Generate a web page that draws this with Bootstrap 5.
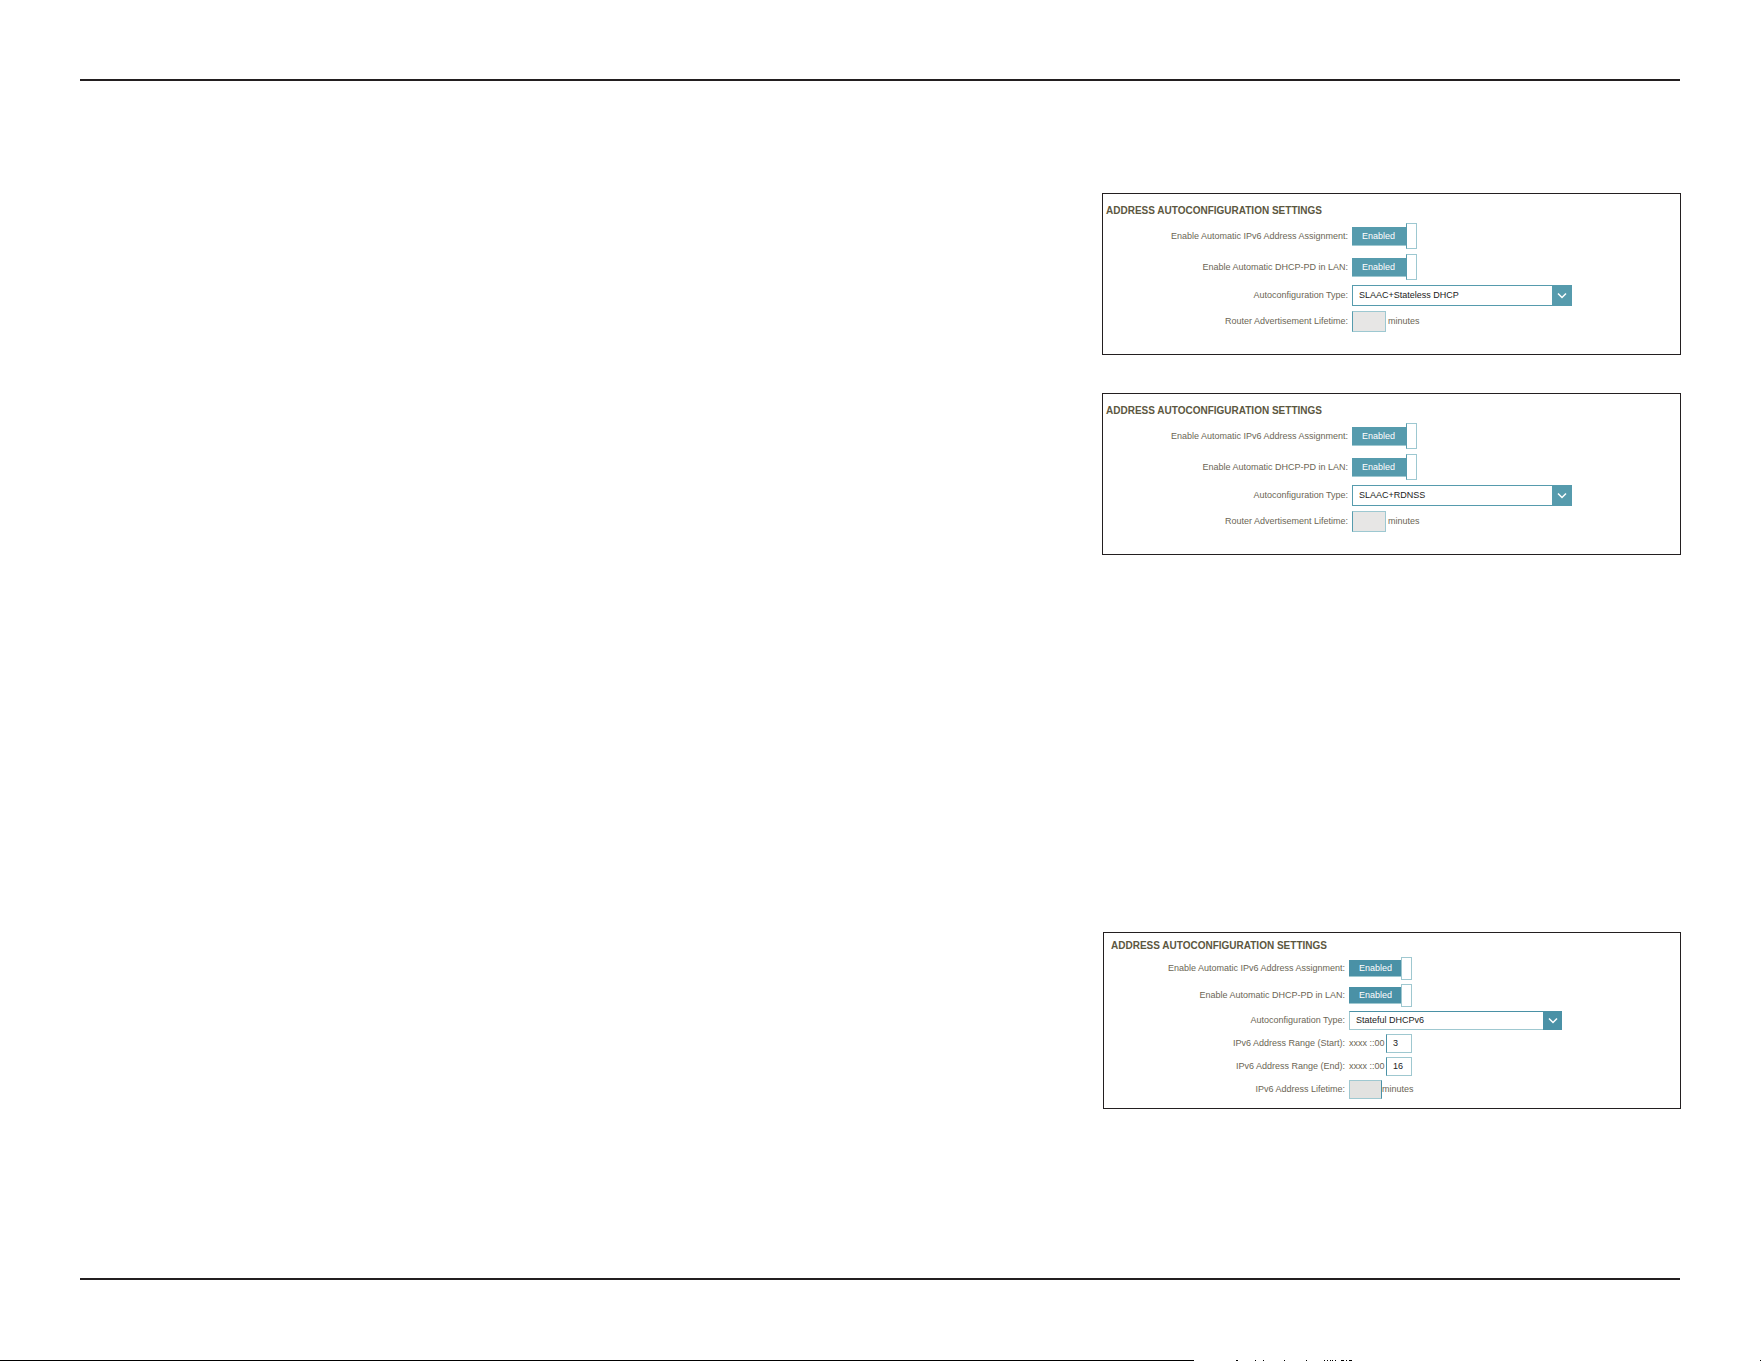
<!DOCTYPE html>
<html lang="en">
<head>
<meta charset="utf-8">
<meta name="viewport" content="width=device-width, initial-scale=1">
<title>Address Autoconfiguration Settings</title>
<link href="https://cdn.jsdelivr.net/npm/bootstrap@5.3.0/dist/css/bootstrap.min.css" rel="stylesheet">
<style>
  body { font-family: "Liberation Sans", Arial, sans-serif; background: #fff; }
  .page-rule { border: 0; border-top: 2px solid #231f20; opacity: 1; margin: 0 1px 0 0; }
  .page-head { padding: 79px 80px 0; }
  .page-body { padding: 112px 80px 0; }
  .page-foot { padding: 0 80px 80px; }

  .settings-panel {
    --teal: #569bad; --pale: #9dc8d1; --fill: #e7e6e5;
    --label-w: 245px; --gap: 5px; --pad-x: 3px;
    --toggle-w: 54px; --toggle-h: 26px; --control-h: 21px;
    --select-w: 220px; --arrow-w: 20px; --num-w: 34px;
    width: 100%; max-width: 579px;
    border: 1px solid #231f20; padding: 10px 0 22px;
    font-size: 9px; line-height: 13px; color: #6b6655;
  }
  .settings-panel.is-compact {
    --teal: #4a91a6; --pale: #9fc8d0; --fill: #e2e2e0;
    --label-w: 241px; --gap: 4px; --pad-x: 7px;
    --toggle-w: 52px; --toggle-h: 23px; --control-h: 19px;
    --select-w: 213px; --arrow-w: 19px; --num-w: 33px;
    max-width: 578px; padding: 6px 0 9px;
  }
  .panel-title {
    font-size: 10px; line-height: 14px; font-weight: 700; color: #5c573f;
    margin: 0 0 5px; padding-left: var(--pad-x);
  }
  .is-compact .panel-title { margin-bottom: 4px; }
  .setting-rows { gap: var(--gap); }
  .setting-row { gap: 4px; }
  .setting-name { width: var(--label-w); }

  .toggle-switch { height: var(--toggle-h); cursor: pointer; }
  .toggle-text {
    width: var(--toggle-w); padding: 2px 0 2px 10px; line-height: 14px;
    background: var(--teal); color: #fff; border-bottom: 1px solid var(--pale);
  }
  .is-compact .toggle-text { line-height: 12px; }
  .toggle-knob { width: 11px; background: #fff; border: 1px solid var(--pale); border-left-color: var(--teal); }
  .is-compact .toggle-knob { border-left-color: var(--pale); }

  .type-box { width: var(--select-w); }
  .type-select {
    appearance: none; width: 100%; height: var(--control-h); padding: 0 24px 1px 6px;
    border: 1px solid var(--teal); border-radius: 0; background: #fff; color: #222;
    font-size: 9px;
  }
  .is-compact .type-select { border-color: var(--teal) var(--pale) var(--pale); }
  .type-arrow { width: var(--arrow-w); background: var(--teal); pointer-events: none; }

  .num-input {
    height: var(--control-h); width: var(--num-w); padding: 0 6px 2px; border: 1px solid var(--pale);
    border-left-color: var(--teal); border-radius: 0; background: #fff; color: #222;
  }
  .num-input:disabled { background: var(--fill); }
  .is-compact .num-input:disabled { border-color: var(--pale) var(--teal) var(--pale) var(--pale); }
  .range-input { width: 26px; }
  .range-prefix { width: 33px; white-space: nowrap; }
  .unit-text { margin-left: -2px; }
  .is-compact .unit-text { margin-left: -4px; }
  .section-gap { margin-top: 38px; }
  .stateful-gap { margin-top: 377px; }
</style>
<script src="https://cdn.jsdelivr.net/npm/bootstrap@5.3.0/dist/js/bootstrap.bundle.min.js"></script>
</head>
<body class="d-flex flex-column min-vh-100">
<header class="page-head"><hr class="page-rule"></header>

<main class="page-body d-flex flex-column align-items-end">
  <form class="settings-panel">
    <h2 class="panel-title">ADDRESS AUTOCONFIGURATION SETTINGS</h2>
    <div class="setting-rows d-flex flex-column">
      <div class="setting-row d-flex align-items-center">
        <label class="setting-name text-end" for="a-assign">Enable Automatic IPv6 Address Assignment:</label>
        <label class="toggle-switch d-flex align-items-center position-relative"><input class="visually-hidden" type="checkbox" id="a-assign" checked><span class="toggle-text">Enabled</span><span class="toggle-knob align-self-stretch"></span></label>
      </div>
      <div class="setting-row d-flex align-items-center">
        <label class="setting-name text-end" for="a-pd">Enable Automatic DHCP-PD in LAN:</label>
        <label class="toggle-switch d-flex align-items-center position-relative"><input class="visually-hidden" type="checkbox" id="a-pd" checked><span class="toggle-text">Enabled</span><span class="toggle-knob align-self-stretch"></span></label>
      </div>
      <div class="setting-row d-flex align-items-center">
        <label class="setting-name text-end" for="a-type">Autoconfiguration Type:</label>
        <div class="type-box d-flex position-relative">
          <select class="type-select" id="a-type"><option>SLAAC+Stateless DHCP</option></select>
          <span class="type-arrow position-absolute top-0 end-0 h-100 d-flex align-items-center justify-content-center"><svg width="10" height="7" viewBox="0 0 10 7" fill="none" stroke="#fff" stroke-width="1.5" aria-hidden="true"><path d="M1 1.5 5 5.5 9 1.5"/></svg></span>
        </div>
      </div>
      <div class="setting-row d-flex align-items-center">
        <label class="setting-name text-end" for="a-life">Router Advertisement Lifetime:</label>
        <input class="num-input" type="text" id="a-life" disabled>
        <span class="unit-text">minutes</span>
      </div>
    </div>
  </form>

  <form class="settings-panel section-gap">
    <h2 class="panel-title">ADDRESS AUTOCONFIGURATION SETTINGS</h2>
    <div class="setting-rows d-flex flex-column">
      <div class="setting-row d-flex align-items-center">
        <label class="setting-name text-end" for="b-assign">Enable Automatic IPv6 Address Assignment:</label>
        <label class="toggle-switch d-flex align-items-center position-relative"><input class="visually-hidden" type="checkbox" id="b-assign" checked><span class="toggle-text">Enabled</span><span class="toggle-knob align-self-stretch"></span></label>
      </div>
      <div class="setting-row d-flex align-items-center">
        <label class="setting-name text-end" for="b-pd">Enable Automatic DHCP-PD in LAN:</label>
        <label class="toggle-switch d-flex align-items-center position-relative"><input class="visually-hidden" type="checkbox" id="b-pd" checked><span class="toggle-text">Enabled</span><span class="toggle-knob align-self-stretch"></span></label>
      </div>
      <div class="setting-row d-flex align-items-center">
        <label class="setting-name text-end" for="b-type">Autoconfiguration Type:</label>
        <div class="type-box d-flex position-relative">
          <select class="type-select" id="b-type"><option>SLAAC+RDNSS</option></select>
          <span class="type-arrow position-absolute top-0 end-0 h-100 d-flex align-items-center justify-content-center"><svg width="10" height="7" viewBox="0 0 10 7" fill="none" stroke="#fff" stroke-width="1.5" aria-hidden="true"><path d="M1 1.5 5 5.5 9 1.5"/></svg></span>
        </div>
      </div>
      <div class="setting-row d-flex align-items-center">
        <label class="setting-name text-end" for="b-life">Router Advertisement Lifetime:</label>
        <input class="num-input" type="text" id="b-life" disabled>
        <span class="unit-text">minutes</span>
      </div>
    </div>
  </form>

  <form class="settings-panel is-compact stateful-gap">
    <h2 class="panel-title">ADDRESS AUTOCONFIGURATION SETTINGS</h2>
    <div class="setting-rows d-flex flex-column">
      <div class="setting-row d-flex align-items-center">
        <label class="setting-name text-end" for="c-assign">Enable Automatic IPv6 Address Assignment:</label>
        <label class="toggle-switch d-flex align-items-center position-relative"><input class="visually-hidden" type="checkbox" id="c-assign" checked><span class="toggle-text">Enabled</span><span class="toggle-knob align-self-stretch"></span></label>
      </div>
      <div class="setting-row d-flex align-items-center">
        <label class="setting-name text-end" for="c-pd">Enable Automatic DHCP-PD in LAN:</label>
        <label class="toggle-switch d-flex align-items-center position-relative"><input class="visually-hidden" type="checkbox" id="c-pd" checked><span class="toggle-text">Enabled</span><span class="toggle-knob align-self-stretch"></span></label>
      </div>
      <div class="setting-row d-flex align-items-center">
        <label class="setting-name text-end" for="c-type">Autoconfiguration Type:</label>
        <div class="type-box d-flex position-relative">
          <select class="type-select" id="c-type"><option>Stateful DHCPv6</option></select>
          <span class="type-arrow position-absolute top-0 end-0 h-100 d-flex align-items-center justify-content-center"><svg width="10" height="7" viewBox="0 0 10 7" fill="none" stroke="#fff" stroke-width="1.5" aria-hidden="true"><path d="M1 1.5 5 5.5 9 1.5"/></svg></span>
        </div>
      </div>
      <div class="setting-row d-flex align-items-center">
        <label class="setting-name text-end" for="c-start">IPv6 Address Range (Start):</label>
        <span class="range-prefix">xxxx ::00</span>
        <input class="num-input range-input" type="text" id="c-start" value="3">
      </div>
      <div class="setting-row d-flex align-items-center">
        <label class="setting-name text-end" for="c-end">IPv6 Address Range (End):</label>
        <span class="range-prefix">xxxx ::00</span>
        <input class="num-input range-input" type="text" id="c-end" value="16">
      </div>
      <div class="setting-row d-flex align-items-center">
        <label class="setting-name text-end" for="c-life">IPv6 Address Lifetime:</label>
        <input class="num-input" type="text" id="c-life" disabled>
        <span class="unit-text">minutes</span>
      </div>
    </div>
  </form>
</main>

<footer class="mt-auto">
  <div class="page-foot"><hr class="page-rule"></div>
  <!-- top edge of the strip that continues below the page -->
  <svg class="d-block" width="1761" height="1" viewBox="0 0 1761 1" shape-rendering="crispEdges" aria-hidden="true"><path d="M0 0H1194V1H0ZM1236 0h2v1h-2zM1255 0h1v1h-1zM1263 0h1v1h-1zM1284 0h1v1h-1zM1306 0h1v1h-1zM1324 0h1v1h-1zM1327 0h1v1h-1zM1330 0h1v1h-1zM1332 0h1v1h-1zM1335 0h1v1h-1zM1341 0h3v1h-3zM1346 0h1v1h-1zM1349 0h3v1h-3zM1760 0h1v1h-1z"/></svg>
</footer>
</body>
</html>
